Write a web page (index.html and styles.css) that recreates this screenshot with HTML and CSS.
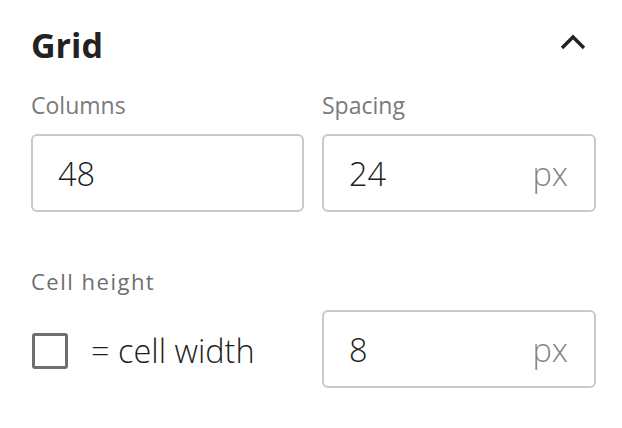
FILE: index.html
```html
<!DOCTYPE html>
<html lang="en">
<head>
<meta charset="utf-8">
<title>Grid</title>
<link rel="stylesheet" href="styles.css">
</head>
<body>
<section class="panel">
  <header class="panel-header">
    <h2 class="panel-title">Grid</h2>
    <button class="collapse" type="button" aria-label="Collapse">
      <svg width="26" height="16" viewBox="0 0 26 16"><polyline points="2,14 13,3 24,14" fill="none" stroke="#222" stroke-width="3.4"/></svg>
    </button>
  </header>

  <div class="fields">
    <div class="field">
      <div class="field-label">Columns</div>
      <div class="input"><span class="input-value">48</span></div>
    </div>
    <div class="field">
      <div class="field-label">Spacing</div>
      <div class="input"><span class="input-value">24</span><span class="input-unit">px</span></div>
    </div>
  </div>

  <div class="section-label">Cell height</div>
  <div class="fields cell-row">
    <label class="check">
      <span class="check-box"></span>
      <span class="check-text">= cell width</span>
    </label>
    <div class="input"><span class="input-value">8</span><span class="input-unit">px</span></div>
  </div>
</section>
</body>
</html>
```

FILE: styles.css
```css
* { box-sizing: border-box; }

html, body {
  margin: 0;
  padding: 0;
  background: #ffffff;
}

body {
  font-family: "Open Sans", "Noto Sans", sans-serif;
  color: #222222;
}

.panel {
  width: 622px;
  padding: 25px 26px 0 31px;
}

.panel-header {
  display: flex;
  align-items: center;
  justify-content: space-between;
  height: 41px;
}

.panel-title {
  margin: 0;
  font-size: 34px;
  line-height: 41px;
  font-weight: 700;
  color: #222222;
}

.collapse {
  border: 0;
  background: none;
  padding: 0;
  margin-right: 10px;
  width: 26px;
  height: 16px;
  display: flex;
  margin-top: -7px;
}

.fields {
  display: grid;
  grid-template-columns: 273px 1fr;
  column-gap: 18px;
  margin-top: 27px;
}

.field-label {
  font-size: 23px;
  line-height: 24px;
  font-weight: 400;
  color: #7a7a7a;
  margin-bottom: 17px;
}

.input {
  height: 78px;
  border: 2px solid #c9c9c9;
  border-radius: 6px;
  display: flex;
  align-items: center;
  justify-content: space-between;
  padding: 0 26px 0 25px;
  font-size: 32.5px;
  font-weight: 300;
}

.input-value {
  color: #1e1e1e;
}

.input-unit {
  color: #858585;
}

.section-label {
  margin-top: 57px;
  font-size: 22px;
  line-height: 24px;
  letter-spacing: 1.5px;
  font-weight: 500;
  color: #6e6e6e;
}

.cell-row {
  margin-top: 17px;
  align-items: center;
}

.check {
  display: flex;
  align-items: center;
  gap: 23px;
  padding-left: 1px;
  padding-top: 4px;
}

.check-box {
  width: 36px;
  height: 36px;
  border: 3.5px solid #6f6f6f;
  border-radius: 3px;
  flex: none;
}

.check-text {
  font-size: 32.5px;
  line-height: 36px;
  font-weight: 300;
  color: #1e1e1e;
}
```
